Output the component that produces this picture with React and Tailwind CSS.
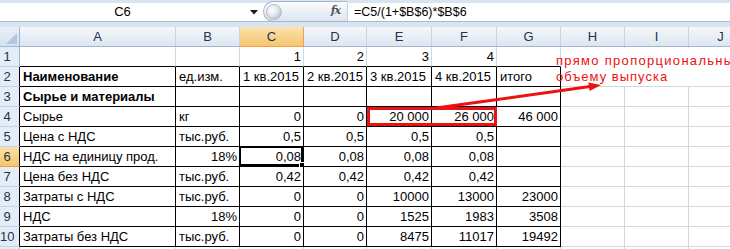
import React from "react";

const COLS = [
  { name: "A", w: "w-[156px]" },
  { name: "B", w: "w-[64px]" },
  { name: "C", w: "w-[64px]" },
  { name: "D", w: "w-[63px]" },
  { name: "E", w: "w-[65px]" },
  { name: "F", w: "w-[65px]" },
  { name: "G", w: "w-[64px]" },
  { name: "H", w: "w-[64px]" },
  { name: "I", w: "w-[64px]" },
  { name: "J", w: "w-[64px]" },
];

const ROWS = [
  ["", "", "1", "2", "3", "4", ""],
  ["Наименование", "ед.изм.", "1 кв.2015", "2 кв.2015", "3 кв.2015", "4 кв.2015", "итого"],
  ["Сырье и материалы", "", "", "", "", "", ""],
  ["Сырье", "кг", "0", "0", "20 000", "26 000", "46 000"],
  ["Цена с НДС", "тыс.руб.", "0,5", "0,5", "0,5", "0,5", ""],
  ["НДС на единицу прод.", "18%", "0,08", "0,08", "0,08", "0,08", ""],
  ["Цена без НДС", "тыс.руб.", "0,42", "0,42", "0,42", "0,42", ""],
  ["Затраты с НДС", "тыс.руб.", "0", "0", "10000", "13000", "23000"],
  ["НДС", "18%", "0", "0", "1525", "1983", "3508"],
  ["Затраты без НДС", "тыс.руб.", "0", "0", "8475", "11017", "19492"],
  ["", "", "", "", "", "", ""],
];

const isNumber = (v) => /^[\d\s,%]+$/.test(v);

const Cell = ({ value, col, row }) => {
  const inTable = row >= 2 && row <= 10 && col <= 6;
  const blackBottom = row >= 1 && row <= 10 && col <= 6;
  const right = inTable ? "border-r-black" : "border-r-[#d0d7e5]";
  const bottom = blackBottom ? "border-b-black" : "border-b-[#d0d7e5]";
  const bold = col === 0 && (row === 2 || row === 3);
  const selected = row === 6 && col === 2;
  return (
    <div
      className={`relative shrink-0 h-[20px] border-r border-b ${right} ${bottom} ${COLS[col].w} ${
        isNumber(value) ? "text-right pr-[2px]" : "text-left pl-[3px]"
      } ${bold ? "font-bold" : ""} whitespace-nowrap overflow-visible leading-[20px] text-[13px] text-black`}
    >
      {value}
      {selected && (
        <div className="absolute -left-[1px] -top-[1px] right-0 bottom-0 border-2 border-black">
          <div className="absolute -right-[4px] -bottom-[4px] w-[6px] h-[6px] bg-black border border-white" />
        </div>
      )}
    </div>
  );
};

const RowHeader = ({ n }) => {
  const active = n === 6;
  const inTable = n >= 2 && n <= 10;
  return (
    <div
      className={`shrink-0 w-[20px] h-[20px] border-b border-r ${
        inTable ? "border-r-black" : "border-r-[#9eb6ce]"
      } ${
        active
          ? "bg-gradient-to-b from-[#fbe0a8] to-[#f5c56a] border-b-[#f0a04a]"
          : "bg-[#e4ecf7] border-b-[#c5d3e4]"
      } text-center pr-[5px] leading-[20px] text-[13px] text-[#22334a]`}
    >
      {n <= 10 ? n : ""}
    </div>
  );
};

export default function App() {
  return (
    <div className="relative w-[730px] h-[249px] overflow-hidden bg-[#d9e4f1] font-['Liberation_Sans',Arial,sans-serif]">
      {/* formula bar */}
      <div className="pt-[3px]">
        <div className="flex h-[19px] bg-white border-b border-[#a9bcd5]">
          <div className="w-[245px] flex items-center justify-center text-[13px] text-black">C6</div>
          <div className="w-[18px] flex items-center justify-center">
            <svg width="8" height="5" viewBox="0 0 8 5">
              <polygon points="0,0 8,0 4,4.5" fill="#1a1a1a" />
            </svg>
          </div>
          <div className="relative -mt-[2px] h-[21px] w-[84px] flex items-center rounded-l-full border border-r-0 border-[#a4b6cc] bg-gradient-to-b from-[#fbfcfe] to-[#dde6f1]">
            <div className="ml-[2px] w-[16px] h-[16px] rounded-full border border-[#b5bfca] bg-[radial-gradient(circle_at_35%_35%,#ffffff_0%,#e3e6ea_45%,#9ea7b1_100%)]" />
            <span className="ml-auto mr-[7px] font-['DejaVu_Serif',serif] italic font-bold text-[11px] text-[#555] tracking-[-1px]">fx</span>
          </div>
          <div className="flex-1 flex items-center pl-[6px] border-l border-[#c4d1e1] text-[12.5px] text-black">
            =C5/(1+$B$6)*$B$6
          </div>
        </div>
      </div>
      <div className="h-[5px]" />

      {/* column headers */}
      <div className="flex">
        <div className="shrink-0 w-[20px] h-[20px] border-r border-b border-[#9eb6ce] bg-gradient-to-b from-[#e9eff8] to-[#d6e1ef] flex items-end justify-end p-[2px]">
          <svg width="11" height="11" viewBox="0 0 11 11">
            <polygon points="11,0 11,11 0,11" fill="#b4c7df" />
          </svg>
        </div>
        {COLS.map((c) => (
          <div
            key={c.name}
            className={`shrink-0 ${c.w} h-[20px] border-r border-b text-center leading-[20px] text-[13px] text-[#22334a] ${
              c.name === "C"
                ? "bg-gradient-to-b from-[#fbe2ae] to-[#f5c56b] border-[#f0a04a]"
                : "bg-gradient-to-b from-[#f4f7fb] to-[#dee6f1] border-r-[#c5d3e4] border-b-[#9eb6ce]"
            }`}
          >
            {c.name}
          </div>
        ))}
      </div>

      {/* sheet body */}
      <div className="bg-white">
        {ROWS.map((cells, i) => {
          const row = i + 1;
          const full = [...cells, "", "", ""];
          return (
            <div key={row} className="flex">
              <RowHeader n={row} />
              {full.map((v, c) => (
                <Cell key={c} value={v} col={c} row={row} />
              ))}
            </div>
          );
        })}
      </div>

      {/* text box note */}
      <div className="absolute left-[562px] top-[48px] w-[170px] h-[38px] bg-white" />
      <div className="absolute left-[556px] top-[53px] text-[13px] leading-[16px] tracking-[1.3px] text-[#f01010] whitespace-nowrap">
        <div>прямо пропорциональны</div>
        <div className="tracking-[1px]">объему выпуска</div>
      </div>

      {/* red highlight box */}
      <div className="absolute left-[367px] top-[107px] w-[130px] h-[19px] border-[3px] border-[#ee1111]" />

      {/* arrow */}
      <svg className="absolute left-0 top-0 pointer-events-none" width="730" height="249">
        <line x1="436" y1="108" x2="590" y2="86.6" stroke="#ee1111" strokeWidth="3" />
        <polygon points="601,85 589.7,91 588.3,82.4" fill="#ee1111" />
      </svg>
    </div>
  );
}
